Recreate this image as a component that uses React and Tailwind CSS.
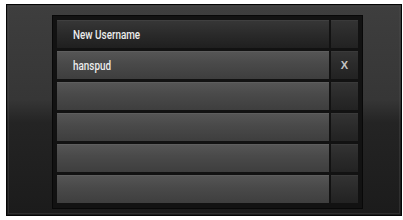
import React from "react";

const rows = [
  { text: "New Username", dark: true, x: false },
  { text: "hanspud", dark: false, x: true },
  { text: "", dark: false, x: false },
  { text: "", dark: false, x: false },
  { text: "", dark: false, x: false },
  { text: "", dark: false, x: false },
];

export default function App() {
  return (
    <div className="w-[403px] h-[220px] bg-white pl-[6px] pt-[4px] pr-[1px] pb-[4px]">
      <div className="w-full h-full border border-[#050505] bg-[linear-gradient(180deg,#3e3e3e_0%,#363636_45%,#242424_56%,#1b1b1b_100%)] p-[1px]">
        <div className="w-full h-full border border-[#4a4a4a]/40 pl-[43px] pt-[8px]">
          <div className="w-[311px] h-[194px] bg-[#121212] border border-[#080808] pl-[4px] pr-[4px] pt-[4px] flex flex-col gap-[3px]">
            {rows.map((r, i) => (
              <div key={i} className="flex h-[28px] gap-[2px]">
                <div
                  className={
                    "w-[272px] h-full flex items-center pl-[16px] border-t " +
                    (r.dark
                      ? "bg-[linear-gradient(180deg,#363636_0%,#2a2a2a_50%,#1f1f1f_100%)] border-[#404040]"
                      : "bg-[linear-gradient(180deg,#555555_0%,#4a4a4a_40%,#3e3e3e_100%)] border-[#5e5e5e]")
                  }
                >
                  <span className="inline-block origin-left scale-x-[0.76] text-[13px] leading-none text-[#ececec] font-medium [font-family:Roboto,'Liberation_Sans',sans-serif]">
                    {r.text}
                  </span>
                </div>
                <div className="w-[27px] h-full flex items-center justify-center bg-[linear-gradient(180deg,#333333_0%,#2a2a2a_50%,#222222_100%)] border-t border-[#3a3a3a]">
                  {r.x && (
                    <span className="text-[11px] leading-none font-bold text-[#c4c4c4] [font-family:'Liberation_Sans',Arial,sans-serif]">
                      X
                    </span>
                  )}
                </div>
              </div>
            ))}
          </div>
        </div>
      </div>
    </div>
  );
}
